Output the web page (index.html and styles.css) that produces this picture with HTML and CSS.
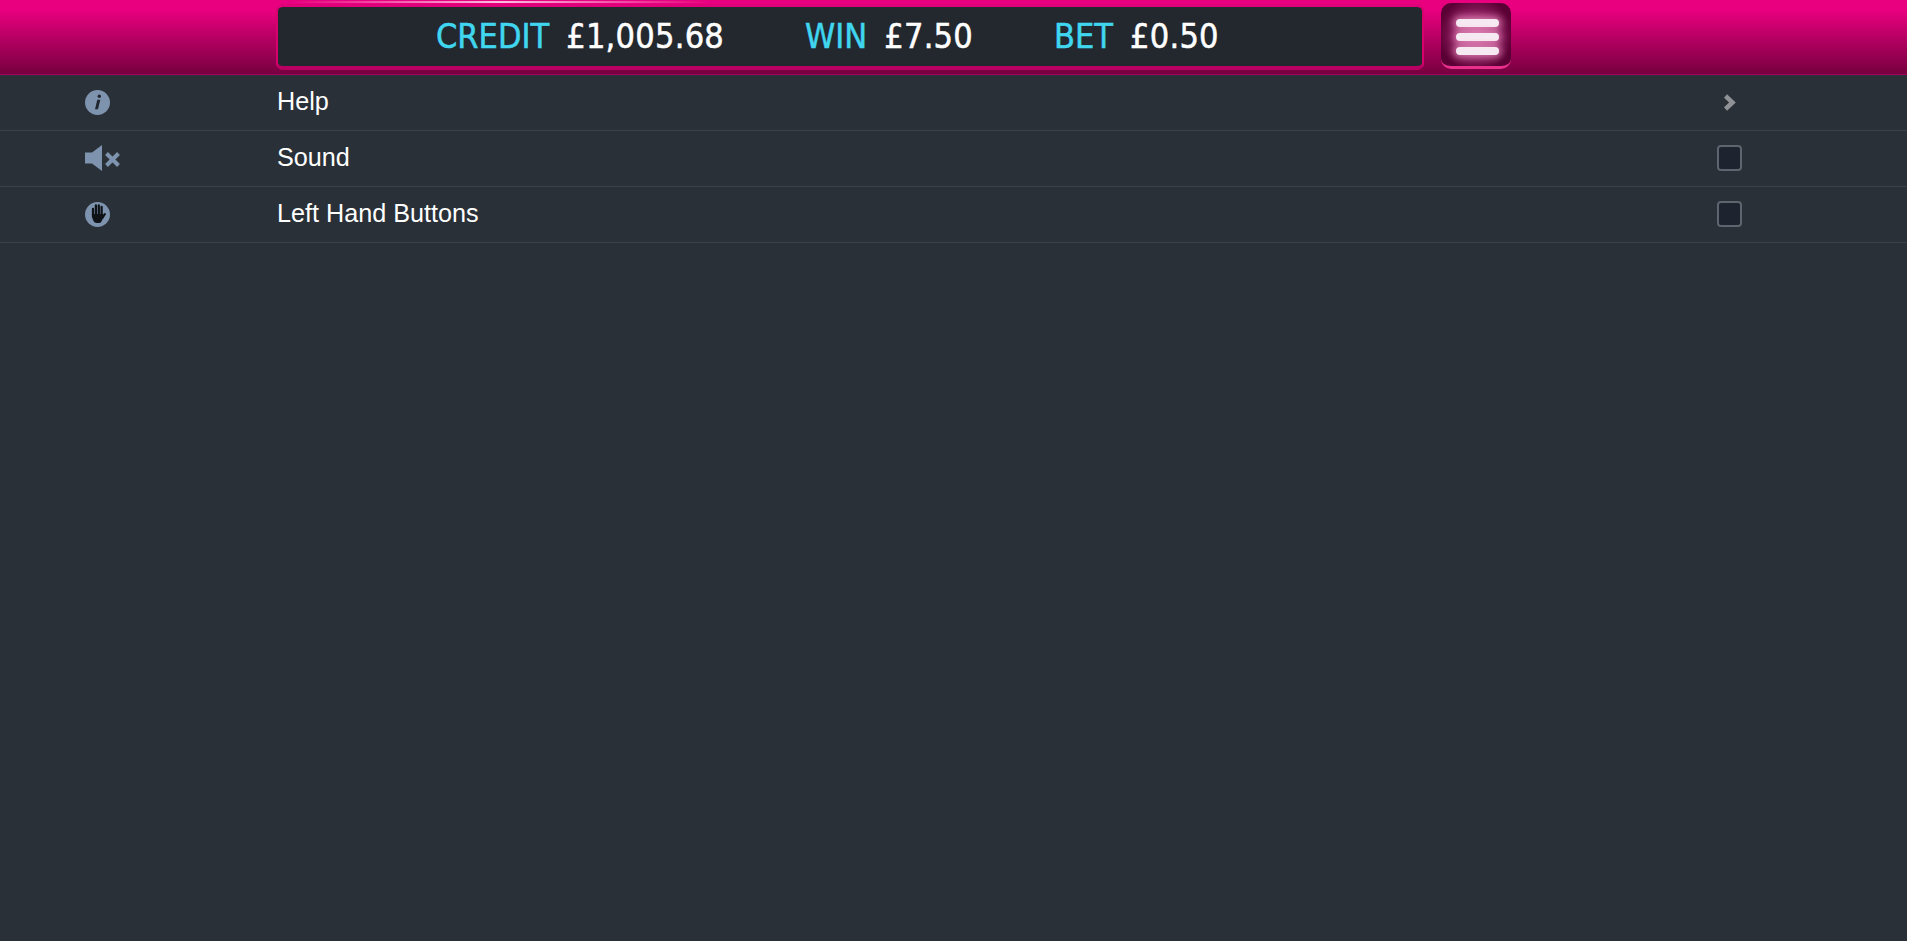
FILE: index.html
```html
<!DOCTYPE html>
<html lang="en">
<head>
    <meta charset="UTF-8">
    <meta name="viewport" content="width=device-width, initial-scale=1.0">
    <title>Game Menu</title>
    <link rel="stylesheet" href="styles.css">
</head>
<body>
<header class="top-bar">
    <div class="balance-panel">
        <div class="balance-item"><span class="balance-label">CREDIT</span><span class="balance-value">£1,005.68</span></div>
        <div class="balance-item"><span class="balance-label">WIN</span><span class="balance-value">£7.50</span></div>
        <div class="balance-item"><span class="balance-label">BET</span><span class="balance-value">£0.50</span></div>
    </div>
    <button class="menu-button" type="button" aria-label="Menu">
        <span class="menu-line"></span>
        <span class="menu-line"></span>
        <span class="menu-line"></span>
    </button>
</header>
<ul class="settings-list">
    <li class="settings-row">
        <span class="settings-icon">
            <svg width="25" height="25" viewBox="0 0 25 25">
                <circle cx="12.5" cy="12.5" r="12.5" fill="#7e93ad"/>
                <circle cx="14.300" cy="6.300" r="1.700" fill="#20262d"/>
                <path d="M12.300 9.800h3l-2.300 9.400h-3z" fill="#20262d"/>
            </svg>
        </span>
        <span class="settings-label">Help</span>
        <span class="settings-control">
            <svg width="13" height="17" viewBox="0 0 13 17">
                <path d="M2.500 2l7 6.500-7 6.500" fill="none" stroke="#8f9297" stroke-width="4.500"/>
            </svg>
        </span>
    </li>
    <li class="settings-row">
        <span class="settings-icon">
            <svg width="36" height="26" viewBox="0 0 36 26">
                <path d="M0 7.500h7L17 0v26L7 18.500H0z" fill="#7e93ad"/>
                <path d="M21.500 8.500l12 12M33.500 8.500l-12 12" stroke="#7e93ad" stroke-width="4" fill="none"/>
            </svg>
        </span>
        <span class="settings-label">Sound</span>
        <span class="settings-control"><input class="settings-check" type="checkbox"></span>
    </li>
    <li class="settings-row">
        <span class="settings-icon">
            <svg width="25" height="25" viewBox="0 0 25 25">
                <circle cx="12.5" cy="12.500" r="12.5" fill="#7e93ad"/>
                <g stroke="#0f1318" stroke-width="2.300" stroke-linecap="round" fill="none">
                    <path d="M8 7V13M10.900 3.500V13M13.800 3.500V13M16.600 5V13"/>
                    <path d="M17.500 15.500l2.300-3.300"/>
                </g>
                <path d="M6.900 12h10.900l.7 3.500-2.200 4.200c-.5.800-1.200 1.200-2.200 1.200h-2.400c-1.500 0-2.500-.7-3.200-2L6.900 15z" fill="#0f1318"/>
            </svg>
        </span>
        <span class="settings-label">Left Hand Buttons</span>
        <span class="settings-control"><input class="settings-check" type="checkbox"></span>
    </li>
</ul>
</body>
</html>
```

FILE: styles.css
```css
* {
    box-sizing: border-box;
}
html,
body {
    height: 100%;
}
body {
    margin: 0;
    background-color: #2a3038;
    font-family: "Liberation Sans", Arial, sans-serif;
    color: #fff;
}
.top-bar {
    display: flex;
    align-items: flex-start;
    height: 75px;
    padding: 4px 0 0 276px;
    background:
        linear-gradient(to right, rgba(255, 255, 255, 0), rgba(255, 255, 255, 0.75), rgba(255, 255, 255, 0)) no-repeat 290px 1px / 420px 2px,
        linear-gradient(to bottom, #e8007e 0%, #e8007e 14%, #76003f 100%);
    border-bottom: 1px solid #a8005f;
}
.balance-panel {
    display: flex;
    align-items: center;
    width: 1148px;
    height: 66px;
    padding: 0 0 2px 158px;
    gap: 81px;
    background-color: #23282f;
    border-style: solid;
    border-width: 3px 2px 4px;
    border-color: #e0007a #d8006f #b80062;
    border-radius: 7px;
}
.balance-item {
    display: flex;
    gap: 17px;
    font-family: "DejaVu Sans Condensed", "DejaVu Sans", sans-serif;
    font-size: 34px;
    line-height: 40px;
    -webkit-text-stroke: 0.5px;
}
.balance-label {
    color: #40d6f0;
}
.balance-value {
    color: #fff;
    letter-spacing: 0.25px;
}
.menu-button {
    display: flex;
    flex-direction: column;
    justify-content: center;
    align-items: center;
    gap: 6px;
    width: 70px;
    height: 66px;
    margin: -1px 0 0 17px;
    padding: 5px 0 0 2px;
    background: radial-gradient(circle, #b04080 0%, #8a1c5c 45%, #5a0034 80%);
    border: none;
    border-bottom: 3px solid #e8308c;
    border-radius: 10px;
}
.menu-line {
    width: 43px;
    height: 8px;
    background-color: #f6eaf2;
    border-radius: 4px;
    box-shadow: 0 0 7px 3px rgba(255, 170, 215, 0.6);
}
.settings-list {
    margin: 0;
    padding: 0;
    list-style: none;
}
.settings-row {
    display: flex;
    align-items: center;
    height: 56px;
    padding: 0 0 1px 85px;
    border-bottom: 1px solid #3a424c;
}
.settings-icon {
    display: flex;
    width: 192px;
}
.settings-label {
    flex: 1;
    padding-bottom: 2px;
    font-size: 25.2px;
}
.settings-control {
    display: flex;
    justify-content: center;
    width: 26px;
    margin-right: 165px;
}
.settings-check {
    appearance: none;
    width: 25px;
    height: 26px;
    margin: 0;
    background-color: #1e2330;
    border: 2px solid #5f646e;
    border-radius: 4px;
}
```
